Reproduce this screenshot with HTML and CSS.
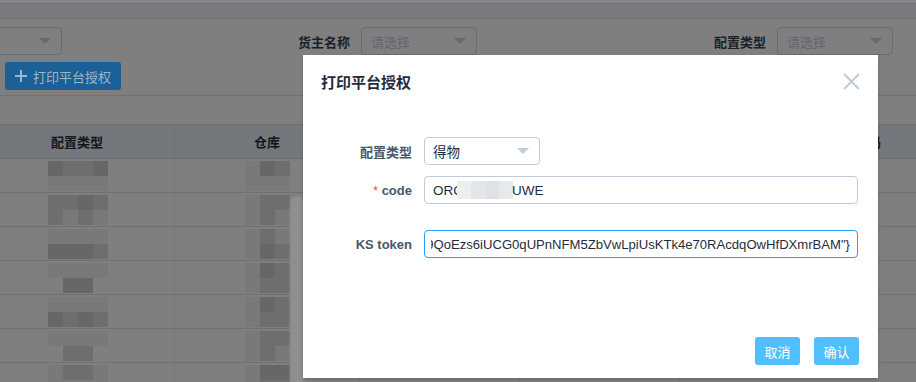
FILE: index.html
```html
<!DOCTYPE html>
<html lang="zh-CN">
<head>
    <meta charset="utf-8">
    <title>打印平台授权</title>
    <link rel="stylesheet" href="styles.css">
</head>
<body>
    <div class="page">
        <div class="strip"></div>
        <div class="topbar"></div>

        <div class="filters">
            <div class="select select-cut"><span class="placeholder"></span><i class="caret"></i></div>
            <div class="filter-item owner">
                <span class="filter-label">货主名称</span>
                <div class="select"><span class="placeholder">请选择</span><i class="caret"></i></div>
            </div>
            <div class="filter-item type">
                <span class="filter-label">配置类型</span>
                <div class="select"><span class="placeholder">请选择</span><i class="caret"></i></div>
            </div>
        </div>

        <div class="toolbar">
            <button class="btn-add"><i class="plus"></i>打印平台授权</button>
        </div>

        <div class="table">
            <div class="row head">
                <div class="cell c1">配置类型</div>
                <div class="cell c2">仓库</div>
                <div class="cell c3">状态</div>
                <div class="cell c4">创建时间</div>
                <div class="cell c5 left">授权码</div>
            </div>
            <div class="row">
                <div class="cell c1"><div class="mosaic m4"><i class="a"></i><i class="b"></i><i class="b"></i><i class="a"></i><i class="c"></i><i class="c"></i><i class="c"></i><i class="c"></i></div></div>
                <div class="cell c2"><div class="mosaic m3"><i class="c"></i><i class="a"></i><i class="b"></i><i class="c"></i><i class="c"></i><i class="c"></i></div></div>
                <div class="cell c3"></div><div class="cell c4"></div><div class="cell c5"></div>
            </div>
            <div class="row">
                <div class="cell c1"><div class="mosaic m4"><i class="b"></i><i class="b"></i><i class="a"></i><i class="b"></i><i class="b"></i><i class="c"></i><i class="b"></i><i class="c"></i></div></div>
                <div class="cell c2"><div class="mosaic m3"><i class="c"></i><i class="b"></i><i class="b"></i><i class="c"></i><i class="b"></i><i class="c"></i></div></div>
                <div class="cell c3"></div><div class="cell c4"></div><div class="cell c5"></div>
            </div>
            <div class="row">
                <div class="cell c1"><div class="mosaic m4"><i class="c"></i><i class="c"></i><i class="c"></i><i class="c"></i><i class="a"></i><i class="a"></i><i class="a"></i><i class="b"></i></div></div>
                <div class="cell c2"><div class="mosaic m3"><i class="c"></i><i class="b"></i><i class="c"></i><i class="c"></i><i class="a"></i><i class="b"></i></div></div>
                <div class="cell c3"></div><div class="cell c4"></div><div class="cell c5"></div>
            </div>
            <div class="row">
                <div class="cell c1"><div class="mosaic m4"><i class="c"></i><i class="c"></i><i class="c"></i><i class="c"></i><i class="e"></i><i class="a"></i><i class="a"></i><i class="e"></i></div></div>
                <div class="cell c2"><div class="mosaic m3"><i class="c"></i><i class="a"></i><i class="b"></i><i class="c"></i><i class="b"></i><i class="b"></i></div></div>
                <div class="cell c3"></div><div class="cell c4"></div><div class="cell c5"></div>
            </div>
            <div class="row">
                <div class="cell c1"><div class="mosaic m4"><i class="c"></i><i class="c"></i><i class="c"></i><i class="c"></i><i class="a"></i><i class="b"></i><i class="a"></i><i class="b"></i></div></div>
                <div class="cell c2"><div class="mosaic m3"><i class="c"></i><i class="a"></i><i class="b"></i><i class="c"></i><i class="b"></i><i class="b"></i></div></div>
                <div class="cell c3"></div><div class="cell c4"></div><div class="cell c5"></div>
            </div>
            <div class="row">
                <div class="cell c1"><div class="mosaic m4"><i class="c"></i><i class="c"></i><i class="c"></i><i class="c"></i><i class="e"></i><i class="b"></i><i class="b"></i><i class="e"></i></div></div>
                <div class="cell c2"><div class="mosaic m3"><i class="c"></i><i class="b"></i><i class="b"></i><i class="c"></i><i class="b"></i><i class="c"></i></div></div>
                <div class="cell c3"></div><div class="cell c4"></div><div class="cell c5"></div>
            </div>
            <div class="row">
                <div class="cell c1"><div class="mosaic m4"><i class="c"></i><i class="b"></i><i class="b"></i><i class="c"></i><i class="c"></i><i class="c"></i><i class="c"></i><i class="c"></i></div></div>
                <div class="cell c2"><div class="mosaic m3"><i class="c"></i><i class="a"></i><i class="a"></i><i class="c"></i><i class="b"></i><i class="b"></i></div></div>
                <div class="cell c3 text">成功</div><div class="cell c4 text">顺丰快递</div><div class="cell c5"></div>
            </div>
        </div>

        <div class="smear"></div>
    </div>

    <div class="dialog">
        <div class="dialog-header">
            <span class="dialog-title">打印平台授权</span>
            <svg class="close" width="17" height="17" viewBox="0 0 17 17">
                <path d="M1 1L16 16M16 1L1 16" stroke="#bfcbd9" stroke-width="2" fill="none"/>
            </svg>
        </div>
        <div class="dialog-body">
            <div class="form-item">
                <label class="form-label">配置类型</label>
                <div class="input select-box">
                    <span>得物</span>
                    <i class="caret light"></i>
                </div>
            </div>
            <div class="form-item code">
                <label class="form-label"><em>*</em> code</label>
                <div class="input">
                    <span>ORC</span><span class="blur"><i></i><i></i><i></i><i></i></span><span>UWE</span>
                </div>
            </div>
            <div class="form-item">
                <label class="form-label">KS token</label>
                <div class="input focused">
                    <div class="clip">
                        <span>{"token":"eyJhbGciOiJIUzI1NiJ9.eyJ9QoEzs6iUCG0qUPnNFM5ZbVwLpiUsKTk4e70RAcdqOwHfDXmrBAM"}</span>
                    </div>
                </div>
            </div>
        </div>
        <div class="dialog-footer">
            <button class="btn">取消</button>
            <button class="btn">确认</button>
        </div>
    </div>
</body>
</html>
```

FILE: styles.css
```css
* {
    margin: 0;
    padding: 0;
    box-sizing: border-box;
}

body {
    font-family: "Liberation Sans", "Noto Sans CJK SC", sans-serif;
    font-size: 13px;
    background-color: #7f7f7f;
    width: 916px;
    height: 382px;
    overflow: hidden;
    position: relative;
}

.page {
    position: relative;
    height: 382px;
    overflow: hidden;
}

.strip {
    height: 3px;
    background: #858585;
}

.topbar {
    height: 16px;
    background: #797b7f;
    border-top: 1px solid #6e7074;
    border-bottom: 1px solid #6c6f73;
}

/* filters */
.filters {
    display: flex;
    align-items: center;
    padding-top: 8px;
    height: 36px;
}

.select {
    width: 116px;
    height: 28px;
    border: 1px solid #686c73;
    border-radius: 4px;
    display: flex;
    align-items: center;
    justify-content: space-between;
    padding: 0 10px 0 9px;
    flex-shrink: 0;
}

.select-cut {
    margin-left: -54px;
}

.placeholder {
    color: #5f6670;
    font-size: 13px;
}

.caret {
    width: 0;
    height: 0;
    border-left: 6px solid transparent;
    border-right: 6px solid transparent;
    border-top: 6px solid #656a72;
}

.caret.light {
    border-top-color: #bfcbd9;
}

.filter-item {
    display: flex;
    align-items: center;
    gap: 11px;
}

.filter-item.owner {
    margin-left: 236px;
}

.filter-item.type {
    margin-left: 237px;
}

.filter-label {
    font-weight: bold;
    color: #1b2129;
}

/* toolbar */
.toolbar {
    padding: 7px 0 5px 5px;
    border-bottom: 1px solid #6d7074;
}

.btn-add {
    width: 116px;
    height: 28px;
    background: #1b6096;
    color: #9db6ca;
    border: none;
    border-radius: 3px;
    font-family: inherit;
    font-size: 13px;
    display: flex;
    align-items: center;
    gap: 6px;
    padding-left: 10px;
}

.plus {
    position: relative;
    width: 12px;
    height: 12px;
}

.plus::before,
.plus::after {
    content: "";
    position: absolute;
    background: #9db6ca;
}

.plus::before {
    left: 5px;
    top: 0;
    width: 2px;
    height: 12px;
}

.plus::after {
    left: 0;
    top: 5px;
    width: 12px;
    height: 2px;
}

/* table */
.table {
    margin-top: 28px;
    margin-left: -20px;
    border-top: 1px solid #6c6f73;
    width: 1100px;
}

.row {
    display: flex;
    height: 34px;
    border-bottom: 1px solid #6e7074;
}

.row.head {
    background: #74777b;
    border-bottom-color: #6b6e72;
}

.cell {
    display: flex;
    align-items: center;
    justify-content: center;
    border-right: 1px solid #76787b;
    flex-shrink: 0;
}

.head .cell {
    font-weight: bold;
    color: #11161d;
    border-right-color: #6e7175;
}

.head .cell.left {
    justify-content: flex-start;
    padding-left: 162px;
}

.c1 { width: 195px; }
.c2 { width: 185px; }
.c3 { width: 160px; }
.c4 { width: 160px; }
.c5 { width: 400px; }

.cell.text {
    color: #1a1f26;
    padding-top: 34px;
}

.mosaic {
    display: grid;
    grid-auto-rows: 15px;
}

.mosaic.m4 {
    grid-template-columns: repeat(4, 15px);
    margin-left: 2px;
}

.mosaic.m3 {
    grid-template-columns: repeat(3, 15px);
}

.mosaic i { display: block; }
.mosaic .a { background: #666768; }
.mosaic .b { background: #6d6e70; }
.mosaic .c { background: #78797a; }
.mosaic .e { background: #7f7f7f; }

.smear {
    position: absolute;
    left: 290px;
    top: 196px;
    width: 14px;
    height: 190px;
    background: #8f8f8f;
    border-radius: 10px 10px 0 0;
    filter: blur(1px);
}

/* dialog */
.dialog {
    position: absolute;
    left: 303px;
    top: 55px;
    width: 575px;
    height: 323px;
    background: #fff;
    box-shadow: 0 2px 4px rgba(0, 0, 0, 0.15);
    display: flex;
    flex-direction: column;
}

.dialog-header {
    display: flex;
    justify-content: space-between;
    align-items: center;
    padding: 18px 18px 0 18px;
    height: 35px;
}

.dialog-title {
    font-size: 15px;
    font-weight: bold;
    color: #1f2d3d;
}

.dialog-body {
    padding: 47px 20px 0 20px;
}

.form-item {
    display: flex;
    align-items: center;
    margin-bottom: 11px;
}

.form-item.code {
    margin-bottom: 26px;
}

.form-label {
    width: 101px;
    padding-right: 12px;
    text-align: right;
    font-weight: bold;
    color: #48576a;
}

.form-label em {
    font-style: normal;
    font-weight: normal;
    color: #ff4949;
}

.input {
    flex: 1;
    height: 28px;
    border: 1px solid #bfcbd9;
    border-radius: 4px;
    display: flex;
    align-items: center;
    padding: 0 8px;
    color: #1f2d3d;
    font-size: 13.5px;
    white-space: nowrap;
    overflow: hidden;
}

.select-box {
    flex: none;
    width: 116px;
    justify-content: space-between;
    padding: 0 10px 0 8px;
}

.input.focused {
    border-color: #20a0ff;
    padding: 0 7px 0 6px;
    font-size: 13.1px;
}

.clip {
    flex: 1;
    display: flex;
    justify-content: flex-end;
    overflow: hidden;
}

.clip span {
    flex-shrink: 0;
}

.blur {
    display: inline-flex;
    margin-left: -6px;
    margin-right: -1px;
    height: 18px;
}

.blur i {
    display: block;
    width: 14px;
    height: 18px;
    background: #eceef0;
}

.blur i:nth-child(2) { background: #e3e5e8; }
.blur i:nth-child(3) { background: #dfe1e4; }
.blur i:nth-child(4) { background: #e7e9eb; }

.dialog-footer {
    margin-top: auto;
    display: flex;
    justify-content: flex-end;
    gap: 14px;
    padding: 0 19px 13px 0;
}

.btn {
    width: 45px;
    height: 28px;
    border: none;
    border-radius: 3px;
    background: #50bfff;
    color: #fff;
    font-family: inherit;
    font-size: 13px;
}
```
